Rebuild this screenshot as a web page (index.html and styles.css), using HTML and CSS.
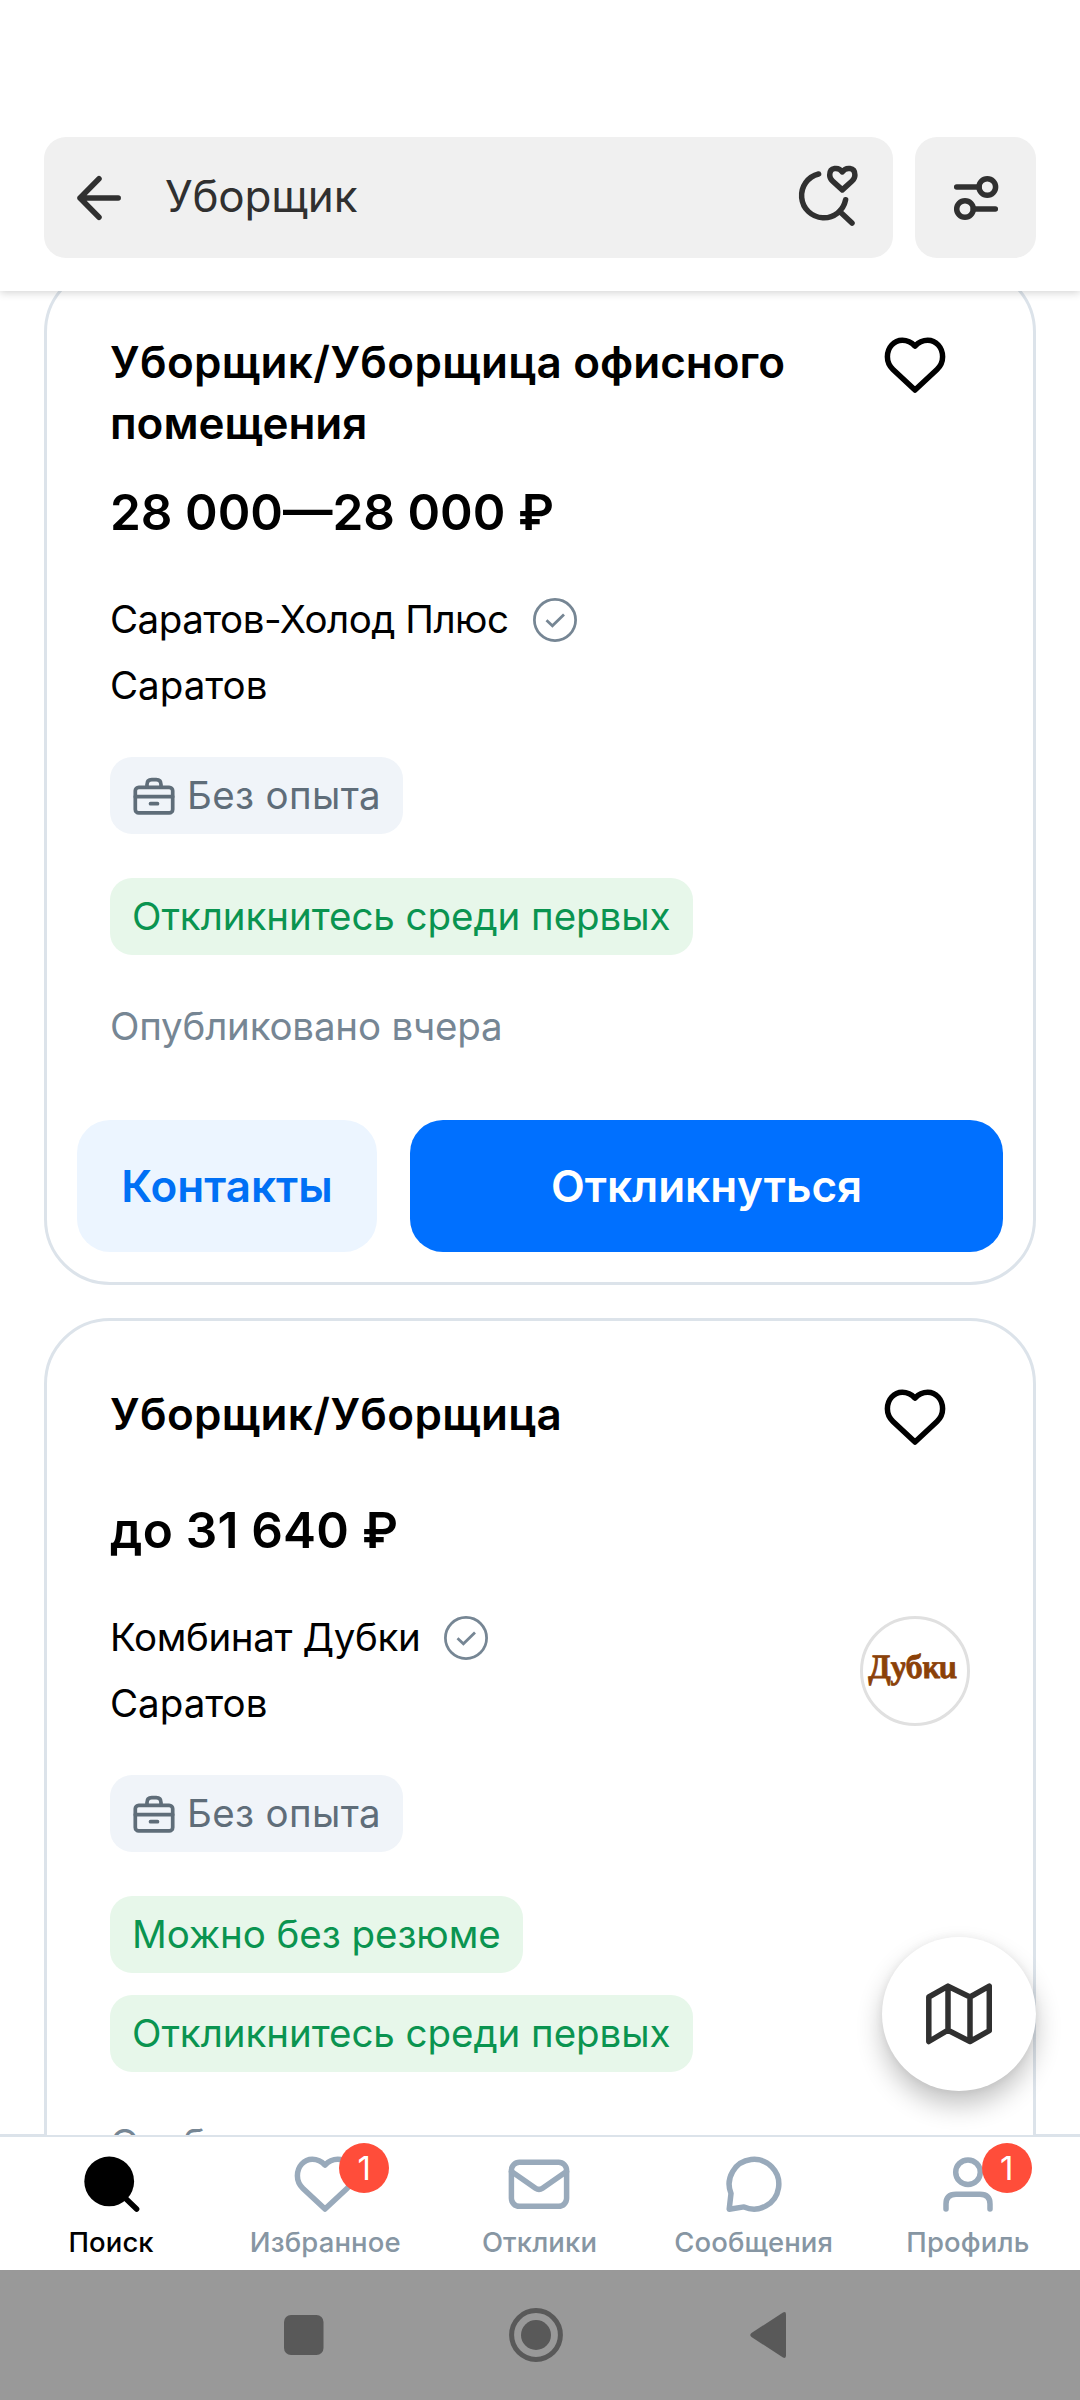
FILE: index.html
```html
<!DOCTYPE html>
<html lang="ru">
<head>
<meta charset="utf-8">
<title>Уборщик — вакансии</title>
<link rel="stylesheet" href="styles.css">
</head>
<body>
<svg class="defs" width="0" height="0">
  <symbol id="heart" viewBox="0 0 66 66"><path d="M33 14C29.6 10.4 25.2 8.3 20.3 8.3C12 8.3 5.4 15.300 5.400 24.800C5.400 30 7.500 34.200 11 37.500L33 58L55 37.500C58.500 34.200 60.600 30 60.600 24.800C60.600 15.300 54 8.300 45.700 8.300C40.800 8.300 36.400 10.400 33 14Z"/></symbol>
  <symbol id="check" viewBox="0 0 44 44"><circle cx="22" cy="22" r="20.600"/><path d="M13.500 22.300L19.400 27.800L31 16.500"/></symbol>
  <symbol id="briefcase" viewBox="0 0 44 44"><rect x="3.300" y="13.300" width="37.400" height="25.600" rx="3.500"/><path d="M15 13V10.500Q15 5.700 19.800 5.700H24.200Q29 5.700 29 10.500V13M3.300 22.700H40.700M18.500 29.700H25.500"/></symbol>
</svg>
<div class="screen">
  <header class="topbar">
    <div class="search">
      <svg class="icon" viewBox="0 0 66 66"><path d="M52.200 33H14M33 13.700L14 33L33 52.300"/></svg>
      <span class="query">Уборщик</span>
      <svg class="icon" viewBox="0 0 66 66"><path d="M24.600 9A22.200 22.200 0 1 0 51.600 34.800Q50.300 41.500 45.500 46.300L58 58"/><path d="M48.300 6.900C44.800 1.800 35.700 1.900 35.700 9.900C35.700 12.500 36.700 14.300 38.500 16L48.300 24.900L58.100 16C59.900 14.300 60.900 12.500 60.900 9.900C60.900 1.900 51.800 1.800 48.300 6.900Z"/></svg>
    </div>
    <div class="filter">
      <svg class="icon" viewBox="0 0 66 66"><circle cx="44.300" cy="22" r="8.300"/><circle cx="22" cy="44" r="8.300"/><path d="M13.700 22H36M30.300 44H52.300"/></svg>
    </div>
  </header>

  <main class="feed">
    <article class="card">
      <div class="head">
        <h2 class="title"><span class="wide">Уборщик/Уборщица</span> офисного помещения</h2>
        <div class="side"><svg class="icon like"><use href="#heart"/></svg></div>
      </div>
      <div class="salary">28 000—28 000 ₽</div>
      <div class="employer">
        <div>
          <div class="company">Саратов-Холод Плюс <svg class="check"><use href="#check"/></svg></div>
          <div class="city">Саратов</div>
        </div>
      </div>
      <div class="tag"><svg class="case"><use href="#briefcase"/></svg>Без опыта</div>
      <div class="perks">
        <div class="tag green">Откликнитесь среди первых</div>
      </div>
      <div class="date">Опубликовано вчера</div>
      <div class="actions">
        <div class="btn soft">Контакты</div>
        <div class="btn primary">Откликнуться</div>
      </div>
    </article>

    <article class="card">
      <div class="head">
        <h2 class="title"><span class="wide">Уборщик/Уборщица</span></h2>
        <div class="side"><svg class="icon like"><use href="#heart"/></svg></div>
      </div>
      <div class="salary">до 31 640 ₽</div>
      <div class="employer">
        <div>
          <div class="company">Комбинат Дубки <svg class="check"><use href="#check"/></svg></div>
          <div class="city">Саратов</div>
        </div>
        <div class="avatar"><svg viewBox="0 0 104 104"><text x="7" y="59" textLength="88" lengthAdjust="spacingAndGlyphs" transform="translate(-10 0) skewX(10)">Дубки</text></svg></div>
      </div>
      <div class="tag"><svg class="case"><use href="#briefcase"/></svg>Без опыта</div>
      <div class="perks">
        <div class="tag green">Можно без резюме</div>
        <div class="tag green">Откликнитесь среди первых</div>
      </div>
      <div class="date">Опубликовано вчера</div>
    </article>
    <div class="map"><svg class="icon" viewBox="0 0 66 66"><path d="M2.800 16L22 5.200L44 16L63.300 5.200V49.700L44 60.500L22 49.200L2.800 60.500ZM22 5.200V49.200M44 16V60.500"/></svg></div>
  </main>

  <nav class="tabs">
    <div class="tab active">
      <svg class="icon" viewBox="0 0 66 66"><circle class="solid" cx="31.200" cy="30.400" r="24.900"/><path d="M44 44L58.600 58"/></svg>
      <span>Поиск</span>
    </div>
    <div class="tab">
      <svg class="icon"><use href="#heart"/></svg>
      <span>Избранное</span><b class="badge">1</b>
    </div>
    <div class="tab">
      <svg class="icon" viewBox="0 0 66 66"><rect x="5.400" y="11.300" width="55.200" height="44" rx="8"/><path d="M5.500 20.500L29.500 37.200Q33 39.600 36.500 37.200L60.500 20.500"/></svg>
      <span>Отклики</span>
    </div>
    <div class="tab">
      <svg class="icon" viewBox="0 0 66 66"><path d="M10 42.500A24.800 24.800 0 1 1 23 55.900L8.200 58.200Z"/></svg>
      <span>Сообщения</span>
    </div>
    <div class="tab">
      <svg class="icon" viewBox="0 0 66 66"><circle cx="33" cy="21.200" r="12.300"/><path d="M11 58V53Q11 43.200 21 43.200H45Q55 43.200 55 53V58"/></svg>
      <span>Профиль</span><b class="badge">1</b>
    </div>
  </nav>

  <footer class="sysbar">
    <svg viewBox="0 0 56 56"><rect x="8" y="8" width="39.500" height="40" rx="7"/></svg>
    <svg viewBox="0 0 56 56"><circle class="ring" cx="28" cy="28" r="24.400"/><circle cx="28" cy="28" r="15"/></svg>
    <svg viewBox="0 0 56 56"><path d="M10.500 26Q8 28 10.500 30L42 50.500Q45 52 45 48.500V7.500Q45 4 42 5.500Z"/></svg>
  </footer>
</div>
</body>
</html>
```
FILE: styles.css
```css
* { box-sizing: border-box; }
body { margin: 0; background: #fff; font-family: Inter, "Noto Sans", sans-serif; color: #000; }
.defs { position: absolute; }
svg { display: block; flex: none; }

.screen { width: 1080px; height: 2400px; display: flex; flex-direction: column; overflow: hidden; }

.icon { width: 66px; height: 66px; fill: none; stroke: currentColor; stroke-width: 5.5; stroke-linecap: round; stroke-linejoin: round; }

.topbar { height: 291px; flex: none; padding: 137px 44px 33px; display: flex; gap: 22px; background: #fff; color: #303030; box-shadow: 0 2px 8px rgba(0,0,0,.17); z-index: 2; }
.search { flex: 1; display: flex; align-items: center; padding: 0 33px 0 22px; background: #f0f0f0; border-radius: 22px; }
.query { flex: 1; padding: 0 0 3px 33px; font-size: 44px; line-height: 60px; letter-spacing: -.2px; }
.filter { width: 121px; display: flex; align-items: center; justify-content: center; background: #f0f0f0; border-radius: 22px; }

.feed { height: 1844px; flex: none; padding: 0 44px; position: relative; overflow: hidden; box-shadow: inset 0 -1px #dce3ea; }
.card { border: 3px solid #dce3ea; border-radius: 66px; padding: 63px 63px 30px; background: #fff; }
.card:first-child { margin-top: -25px; }
.card + .card { margin-top: 33px; }
.head { display: flex; min-height: 88px; }
.title { margin: 0; flex: 1; font-size: 44px; line-height: 61px; font-weight: 600; }
.title .wide { letter-spacing: .35px; }
.side { width: 110px; display: flex; justify-content: center; }
.salary { margin-top: 25px; font-size: 49.5px; line-height: 66px; font-weight: 600; }
.card + .card .salary { letter-spacing: .22px; }
.employer { margin-top: 41px; display: flex; justify-content: space-between; align-items: center; }
.company, .city { font-size: 38.5px; line-height: 66px; }
.company { display: flex; align-items: center; gap: 24px; letter-spacing: -.5px; }
.card + .card .company { letter-spacing: -.36px; }
.check { width: 44px; height: 44px; margin-top: 2px; fill: none; stroke: #768694; stroke-width: 2.75; }
.avatar { width: 110px; height: 110px; margin-top: 2px; border: 3px solid #e0e0e0; border-radius: 50%; }
.avatar text { font: italic bold 34px "Liberation Serif", serif; fill: #8b4108; stroke: #8b4108; stroke-width: .8; }
.tag { width: max-content; height: 77px; margin-top: 39px; padding: 0 22px; display: flex; align-items: center; gap: 11px; border-radius: 22px; background: #f0f4f9; color: #5f6d79; font-size: 38.5px; line-height: 77px; letter-spacing: .36px; }
.case { width: 44px; height: 44px; fill: none; stroke: #5f6d79; stroke-width: 3.7; stroke-linecap: round; }
.perks { margin-top: 44px; display: flex; flex-direction: column; gap: 22px; }
.green { margin: 0; background: #e7f7ea; color: #0a9450; letter-spacing: -.05px; }
.date { margin-top: 38px; font-size: 38.5px; line-height: 66px; letter-spacing: -.2px; color: #768694; }
.actions { margin: 61px -33px 0; display: flex; gap: 33px; }
.btn { height: 132px; border-radius: 33px; font-size: 44px; line-height: 132px; font-weight: 600; text-align: center; }
.soft { width: 300px; background: #ecf5ff; color: #0070f5; }
.primary { flex: 1; background: #0070ff; color: #fff; }

.map { position: absolute; right: 44px; bottom: 44px; width: 154px; height: 154px; border-radius: 50%; background: #fff; color: #303030; display: flex; align-items: center; justify-content: center; box-shadow: 0 14px 26px rgba(0,0,0,.24), 0 0 8px rgba(0,0,0,.06); }

.tabs { height: 135px; flex: none; padding: 14px 5px 0 4px; display: grid; grid-template-columns: repeat(5, 1fr); border-top: 2px solid #dce3ea; background: #fff; }
.tab { position: relative; display: flex; flex-direction: column; align-items: center; gap: 9px; color: #8796a3; font-size: 27.5px; line-height: 33px; font-weight: 500; letter-spacing: .12px; }
.tab .icon { color: #99aabb; }
.tab.active, .tab.active .icon { color: #000; }
.solid { fill: #000; stroke: none; }
.badge { position: absolute; left: calc(50% + 14px); top: -8px; width: 50px; height: 50px; border-radius: 50%; background: #ff4d3a; color: #fff; font-size: 33px; line-height: 50px; font-weight: 400; text-align: center; }

.sysbar { flex: 1; padding: 0 283px 0 275.5px; display: flex; justify-content: space-between; align-items: center; background: #999; }
.sysbar svg { width: 56px; height: 56px; fill: #595959; }
.sysbar .ring { fill: none; stroke: #595959; stroke-width: 5; }
```
